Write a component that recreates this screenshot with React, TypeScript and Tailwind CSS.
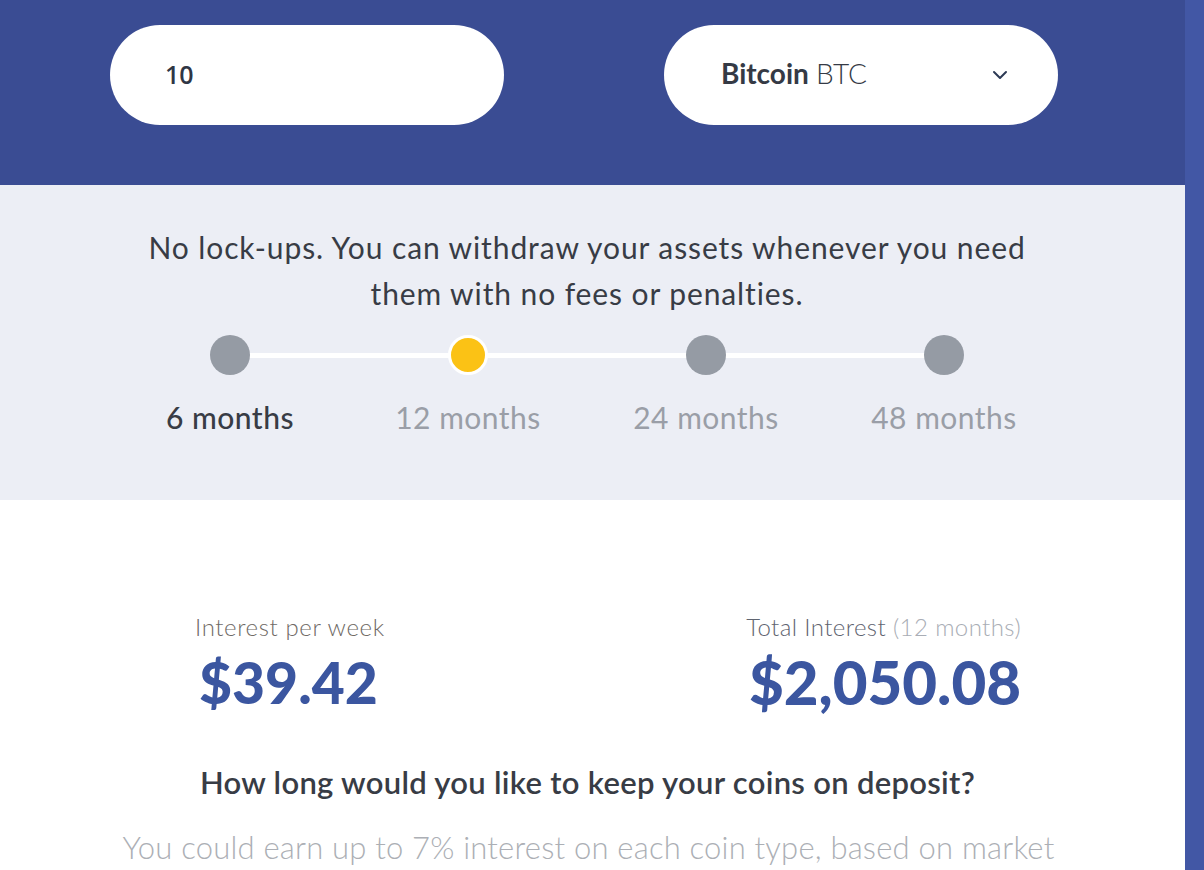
import React, { useState } from 'react';
import { ChevronDown } from 'lucide-react';

const terms = ['6 months', '12 months', '24 months', '48 months'];

const App: React.FC = () => {
  const [amount, setAmount] = useState('10');
  const [term, setTerm] = useState(1);

  return (
    <div className="flex w-[1204px] h-[870px] overflow-hidden bg-white" style={{ fontFamily: 'Lato, "Open Sans", sans-serif' }}>
      <div className="flex-1 flex flex-col">
        {/* Inputs */}
        <div className="h-[185px] bg-[#3a4c93] pt-[25px]">
          <div className="flex justify-between w-[948px] ml-[110px]">
            <div className="w-[394px] h-[100px] rounded-full bg-white flex items-center pl-[55px]">
              <input
                value={amount}
                onChange={(e) => setAmount(e.target.value)}
                className="w-full outline-none text-[25px] font-semibold text-[#2f3645] bg-transparent"
                style={{ fontFamily: '"Open Sans", sans-serif' }}
              />
            </div>
            <div className="w-[394px] h-[100px] rounded-full bg-white flex items-center justify-between pl-[57px] pr-[46px]">
              <span className="text-[28px] text-[#353a45] -mt-[4px]">
                <span className="font-bold">Bitcoin</span> <span className="font-light">BTC</span>
              </span>
              <ChevronDown className="w-6 h-6 text-[#2d3a55]" strokeWidth={2} />
            </div>
          </div>
        </div>

        {/* Lock-up info + term stepper */}
        <div className="h-[315px] bg-[#eceef5] pt-[39px]">
          <p className="text-center text-[30px] leading-[46px] tracking-[0.9px] text-[#383c45] w-[1000px] mx-auto ml-[87px]">
            No lock-ups. You can withdraw your assets whenever you need
            <br />
            them with no fees or penalties.
          </p>
          <div className="relative w-[952px] ml-[111px] mt-[19px]">
            <div className="absolute left-[119px] right-[119px] top-[18px] h-[5px] bg-white" />
            <div className="relative grid grid-cols-4">
              {terms.map((t, i) => (
                <button key={t} onClick={() => setTerm(i)} className="flex flex-col items-center">
                  {i === term ? (
                    <span className="w-[40px] h-[40px] rounded-full bg-[#fbc215] border-[3px] border-white" />
                  ) : (
                    <span className="w-[40px] h-[40px] rounded-full bg-[#959ba4]" />
                  )}
                  <span className={`mt-[24px] text-[30px] leading-[36px] tracking-[0.5px] ${i === 0 ? 'text-[#383c45] font-medium' : 'text-[#9a9ea7]'}`}>
                    {t}
                  </span>
                </button>
              ))}
            </div>
          </div>
        </div>

        {/* Results */}
        <div className="pt-[112px]">
          <div className="flex justify-between w-[826px] ml-[195px]">
            <div>
              <p className="text-[24px] leading-[30px] font-light tracking-[0.6px] text-[#6f6a66]">Interest per week</p>
              <p className="text-[57px] leading-[60px] font-black text-[#3b56a0] ml-[4px] mt-[10px]">$39.42</p>
            </div>
            <div className="text-right">
              <p className="text-[24px] leading-[30px] font-light tracking-[0.4px] text-[#5f6470]">
                Total Interest <span className="text-[#a9adb5]">(12 months)</span>
              </p>
              <p className="text-[60px] leading-[60px] font-black text-[#3b56a0] mt-[10px]">$2,050.08</p>
            </div>
          </div>
          <h2 className="text-center text-[31px] leading-[40px] font-semibold tracking-[0.3px] text-[#383c45] mt-[50px] ml-[-10px]">
            How long would you like to keep your coins on deposit?
          </h2>
          <p className="text-center text-[31px] leading-[40px] font-light tracking-[0.2px] text-[#acafb5] mt-[25px] ml-[-8px] whitespace-nowrap">
            You could earn up to 7% interest on each coin type, based on market
          </p>
        </div>
      </div>
      <div className="w-[19px] bg-[#4257a5]" />
    </div>
  );
};

export default App;
